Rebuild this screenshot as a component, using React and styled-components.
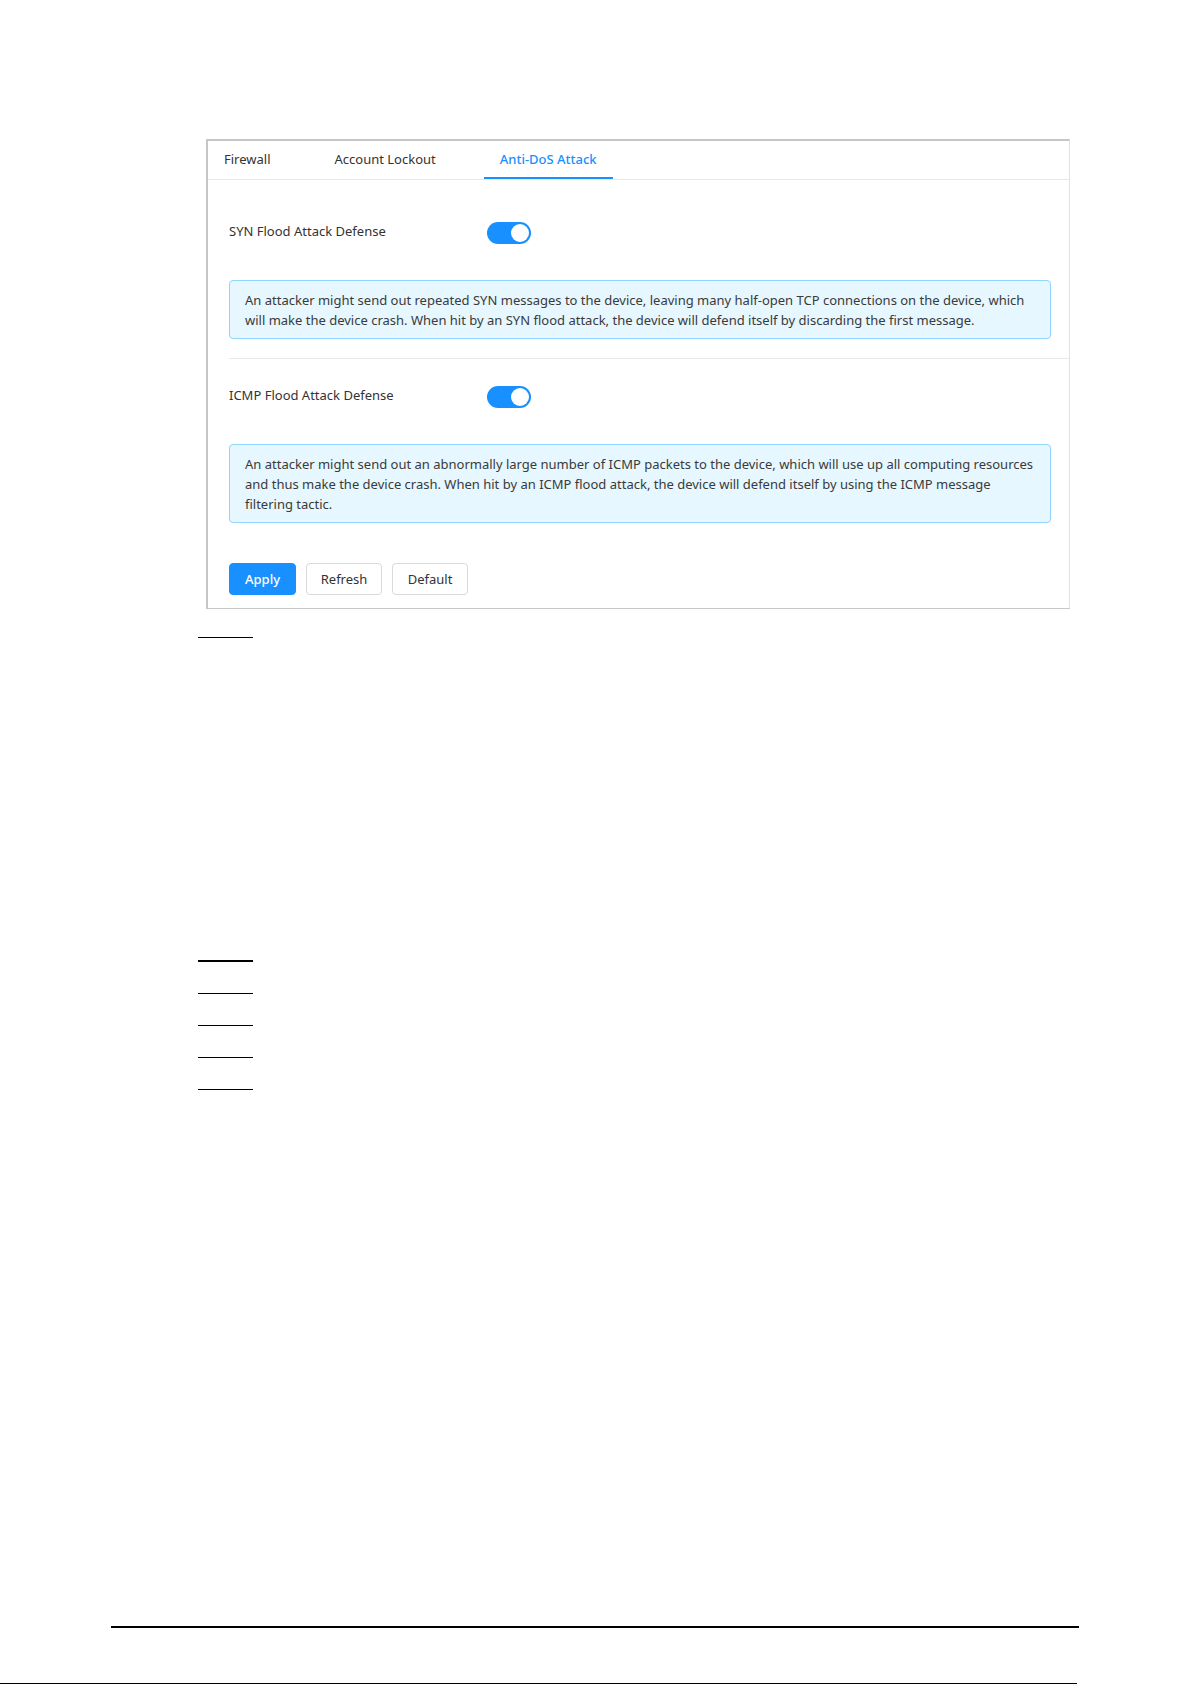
import React, { useState } from 'react'
import styled, { createGlobalStyle } from 'styled-components'

const GlobalStyle = createGlobalStyle`
    html, body {
        margin: 0;
        padding: 0;
        background: #ffffff;
    }
    body {
        font-family: "Noto Sans", "Open Sans", Arial, sans-serif;
        color: #333333;
    }
`

const defenses = [
    {
        key: 'syn',
        label: 'SYN Flood Attack Defense',
        info: 'An attacker might send out repeated SYN messages to the device, leaving many half-open TCP connections on the device, which will make the device crash. When hit by an SYN flood attack, the device will defend itself by discarding the first message.',
    },
    {
        key: 'icmp',
        label: 'ICMP Flood Attack Defense',
        info: 'An attacker might send out an abnormally large number of ICMP packets to the device, which will use up all computing resources and thus make the device crash. When hit by an ICMP flood attack, the device will defend itself by using the ICMP message filtering tactic.',
    },
]

const tabs = ['Firewall', 'Account Lockout', 'Anti-DoS Attack']

function App() {
    const [active, setActive] = useState(2)
    const [enabled, setEnabled] = useState({ syn: true, icmp: true })

    return (
        <Page>
            <GlobalStyle />
            <Panel>
                <TabBar>
                    {tabs.map((t, i) => (
                        <Tab key={t} $active={i === active} onClick={() => setActive(i)}>{t}</Tab>
                    ))}
                </TabBar>
                <Content>
                    {defenses.map((d) => (
                        <Section key={d.key}>
                            <Row>
                                <Label>{d.label}</Label>
                                <Switch
                                    $on={enabled[d.key]}
                                    onClick={() => setEnabled({ ...enabled, [d.key]: !enabled[d.key] })}
                                />
                            </Row>
                            <Alert>{d.info}</Alert>
                        </Section>
                    ))}
                    <Actions>
                        <Button $primary>Apply</Button>
                        <Button>Refresh</Button>
                        <Button>Default</Button>
                    </Actions>
                </Content>
            </Panel>

            <Rule $top={28} />
            <RuleGroup>
                <Rule $thick />
                <Rule />
                <Rule />
                <Rule />
                <Rule />
            </RuleGroup>

            <Footer />
            <PageEdge />
        </Page>
    )
}

export default App

const Page = styled.div`
    width: 1192px;
    height: 1685px;
    padding-top: 139px;
    box-sizing: border-box;
    overflow: hidden;
`
const Panel = styled.div`
    margin-left: 206px;
    width: 864px;
    box-sizing: border-box;
    border-top: 2px solid #c6c6c6;
    border-left: 2px solid #c6c6c6;
    border-right: 1px solid #e2e2e2;
    border-bottom: 1px solid #c6c6c6;
    background: #fff;
`
const TabBar = styled.div`
    display: flex;
    height: 38px;
    border-bottom: 1px solid #e8e8e8;
`
const Tab = styled.div`
    padding: 0 16px;
    margin-right: 32px;
    font-size: 13px;
    line-height: 36px;
    color: ${p => (p.$active ? '#1890ff' : '#333333')};
    font-weight: ${p => (p.$active ? 500 : 400)};
    border-bottom: 2px solid ${p => (p.$active ? '#1890ff' : 'transparent')};
    cursor: pointer;
`
const Content = styled.div`
    padding: 15px 0 13px 21px;
`
const Section = styled.div`
    padding: 26px 18px 19px 0;

    & + & {
        border-top: 1px solid #e8e8e8;
    }
`
const Row = styled.div`
    display: flex;
    align-items: flex-start;
`
const Label = styled.div`
    width: 258px;
    font-size: 13px;
    line-height: 20px;
`
const Switch = styled.button`
    position: relative;
    width: 44px;
    height: 22px;
    margin-top: 1px;
    padding: 0;
    border: none;
    border-radius: 11px;
    background: ${p => (p.$on ? '#1890ff' : '#bfbfbf')};
    cursor: pointer;

    &::after {
        content: '';
        position: absolute;
        top: 2px;
        left: ${p => (p.$on ? '24px' : '2px')};
        width: 18px;
        height: 18px;
        border-radius: 50%;
        background: #fff;
    }
`
const Alert = styled.div`
    margin-top: 36px;
    padding: 9px 15px 8px;
    border: 1px solid #91d5ff;
    border-radius: 4px;
    background: #e6f7ff;
    font-size: 13px;
    line-height: 20px;
    color: #3a3a3a;
`
const Actions = styled.div`
    display: flex;
    gap: 10px;
    margin-top: 21px;
`
const Button = styled.button`
    height: 32px;
    min-width: ${p => (p.$primary ? '0' : '76px')};
    padding: 0 ${p => (p.$primary ? '15px' : '13px')};
    font-family: inherit;
    font-size: 13px;
    border-radius: 4px;
    border: 1px solid ${p => (p.$primary ? '#1890ff' : '#d9d9d9')};
    background: ${p => (p.$primary ? '#1890ff' : '#fff')};
    color: ${p => (p.$primary ? '#fff' : '#333')};
    font-weight: ${p => (p.$primary ? 500 : 400)};
    cursor: pointer;
`
const Rule = styled.div`
    width: 55px;
    height: ${p => (p.$thick ? '2px' : '1px')};
    margin-left: 198px;
    margin-top: ${p => (p.$top ? `${p.$top}px` : '0')};
    background: #000;
`
const RuleGroup = styled.div`
    display: flex;
    flex-direction: column;
    gap: 31px;
    margin-top: 322px;
`
const Footer = styled.div`
    width: 968px;
    height: 2px;
    margin: 536px 0 0 111px;
    background: #000;
`
const PageEdge = styled.div`
    width: 1077px;
    height: 1px;
    margin-top: 55px;
    background: #000;
`
